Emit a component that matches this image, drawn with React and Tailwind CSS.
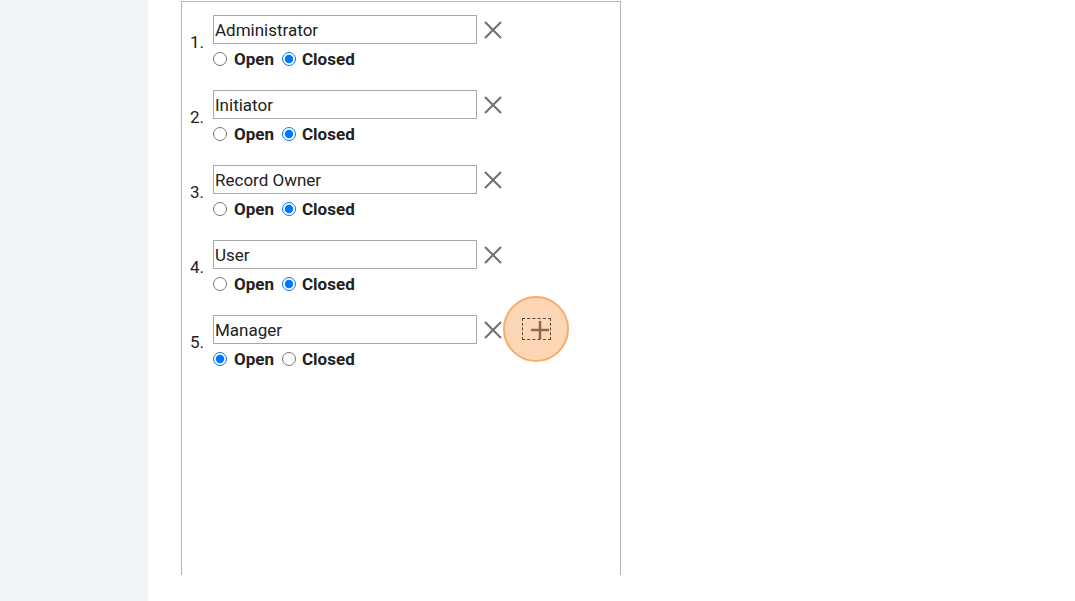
import React from "react";

const ROLES = [
    { name: "Administrator", open: false },
    { name: "Initiator", open: false },
    { name: "Record Owner", open: false },
    { name: "User", open: false },
    { name: "Manager", open: true },
];

function CloseIcon() {
    return (
        <svg width="18" height="18" viewBox="0 0 18 18" className="block">
            <path
                d="M1 1 L17 17 M17 1 L1 17"
                stroke="#6f6f6f"
                strokeWidth="2"
            />
        </svg>
    );
}

function RoleRow({ role, index, last }) {
    return (
        <li className="flex h-[75px]">
            <span className="w-[31px] pl-[8px] pt-[17px] text-[17px] leading-[20px] text-[#222]">
                {index + 1}.
            </span>
            <div className="flex flex-col">
                <div className="flex items-center">
                    <input
                        type="text"
                        defaultValue={role.name}
                        className="h-[29px] w-[264px] border border-[#a9a9a9] px-[1px] text-[17px] text-[#222] outline-none"
                    />
                    <button className="ml-[7px] flex h-[29px] w-[18px] items-center justify-center">
                        <CloseIcon />
                    </button>
                    {last && (
                        <div className="relative ml-[1px] h-[29px] w-[40px]">
                            <div className="absolute left-0 top-[-19px] flex h-[66px] w-[66px] items-center justify-center rounded-full border-2 border-[#f8ab6b] bg-[#fdd6b5]">
                                <div className="relative h-[22px] w-[29px] border border-dashed border-[#5c4a3c]">
                                    <svg
                                        width="20"
                                        height="20"
                                        viewBox="0 0 20 20"
                                        className="absolute left-[7px] top-[1px]"
                                    >
                                        <path
                                            d="M10 1 V19 M1 10 H19"
                                            stroke="#8c6a4f"
                                            strokeWidth="2.5"
                                        />
                                    </svg>
                                </div>
                            </div>
                        </div>
                    )}
                </div>
                <div className="mt-[1px] flex items-center text-[17px] font-bold leading-[28px] text-[#222]">
                    <label className="flex items-center">
                        <input
                            type="radio"
                            name={`role-${index}`}
                            defaultChecked={role.open}
                            className="m-0 h-[14px] w-[14px] accent-[#0075ff]"
                        />
                        <span className="ml-[7px]">Open</span>
                    </label>
                    <label className="ml-[8px] flex items-center">
                        <input
                            type="radio"
                            name={`role-${index}`}
                            defaultChecked={!role.open}
                            className="m-0 h-[14px] w-[14px] accent-[#0075ff]"
                        />
                        <span className="ml-[6px]">Closed</span>
                    </label>
                </div>
            </div>
        </li>
    );
}

export default function App() {
    return (
        <div
            className="flex h-[601px] w-full bg-white"
            style={{ fontFamily: "Roboto, 'Liberation Sans', sans-serif" }}
        >
            {/* Sidebar */}
            <aside className="h-full w-[148px] bg-[#f3f4f6]" />

            {/* Main */}
            <main className="flex-1 pl-[33px] pt-[1px]">
                <div className="h-[574px] w-[440px] border-x border-t border-[#b5b5b5] pt-[13px]">
                    <ol className="flex flex-col">
                        {ROLES.map((role, i) => (
                            <RoleRow
                                key={role.name}
                                role={role}
                                index={i}
                                last={i === ROLES.length - 1}
                            />
                        ))}
                    </ol>
                </div>
            </main>
        </div>
    );
}
